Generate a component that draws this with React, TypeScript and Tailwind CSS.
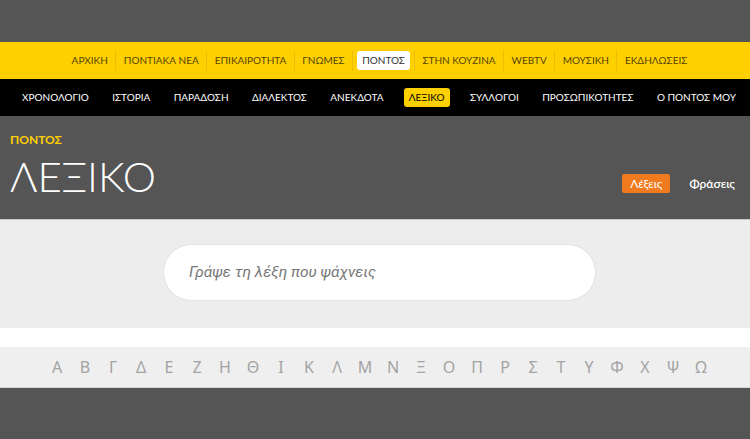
import React from 'react';

const topNav = ['ΑΡΧΙΚΗ', 'ΠΟΝΤΙΑΚΑ ΝΕΑ', 'ΕΠΙΚΑΙΡΟΤΗΤΑ', 'ΓΝΩΜΕΣ', 'ΠΟΝΤΟΣ', 'ΣΤΗΝ ΚΟΥΖΙΝΑ', 'WEBTV', 'ΜΟΥΣΙΚΗ', 'ΕΚΔΗΛΩΣΕΙΣ'];
const subNav = ['ΧΡΟΝΟΛΟΓΙΟ', 'ΙΣΤΟΡΙΑ', 'ΠΑΡΑΔΟΣΗ', 'ΔΙΑΛΕΚΤΟΣ', 'ΑΝΕΚΔΟΤΑ', 'ΛΕΞΙΚΟ', 'ΣΥΛΛΟΓΟΙ', 'ΠΡΟΣΩΠΙΚΟΤΗΤΕΣ', 'Ο ΠΟΝΤΟΣ ΜΟΥ'];
const letters = 'ΑΒΓΔΕΖΗΘΙΚΛΜΝΞΟΠΡΣΤΥΦΧΨΩ'.split('');

const App: React.FC = () => {
  return (
    <div className="w-[750px] h-[439px] overflow-hidden bg-[#555555] antialiased font-['Lato','Noto_Sans',sans-serif]">
      {/* top strip */}
      <div className="h-[42px]" />

      {/* yellow main nav */}
      <div className="h-[37px] bg-[#ffd000] flex items-center justify-center pl-[9px]">
        {topNav.map((item, i) => (
          <div key={item} className={`flex items-center h-[20px] ${i > 0 ? 'border-l border-[#eebd00]' : ''}`}>
            <span
              className={`mx-[4px] px-[3.5px] h-[19px] flex items-center text-[10px] text-[#564400] rounded-[3px] ${
                item === 'ΠΟΝΤΟΣ' ? 'bg-white !text-[#333] px-[5px]' : ''
              }`}
            >
              {item}
            </span>
          </div>
        ))}
      </div>

      {/* black sub nav */}
      <div className="h-[37px] bg-black flex items-center justify-between pl-[19px] pr-[11px]">
        {subNav.map((item) => (
          <span
            key={item}
            className={`px-[3px] h-[19px] flex items-center text-[10px] text-white rounded-[3px] ${
              item === 'ΛΕΞΙΚΟ' ? 'bg-[#ffd000] !text-black px-[5px]' : ''
            }`}
          >
            {item}
          </span>
        ))}
      </div>

      {/* header */}
      <div className="h-[103px] flex justify-between px-[10px]">
        <div className="pt-[18px]">
          <div className="text-[12px] font-bold text-[#ffd000] leading-none">ΠΟΝΤΟΣ</div>
          <div className="text-[42px] font-light text-white leading-none mt-[9px]">ΛΕΞΙΚΟ</div>
        </div>
        <div className="flex items-start gap-[19px] pt-[58px] pr-[5px]">
          <span className="bg-[#f07a1e] text-white text-[12px] rounded-[2px] px-[8px] h-[19px] flex items-center">Λέξεις</span>
          <span className="text-white text-[12px] font-semibold h-[19px] flex items-center">Φράσεις</span>
        </div>
      </div>

      {/* search */}
      <div className="h-[109px] bg-[#ededed] border-t border-[#c9c9c9] flex justify-center pt-[24px] pl-[9px]">
        <div className="w-[433px] h-[57px] bg-white rounded-full border border-[#e2e2e2] flex items-center pl-[25px]">
          <span className="italic text-[15.5px] text-[#777] font-['Roboto','Noto_Sans',sans-serif]">Γράψε τη λέξη που ψάχνεις</span>
        </div>
      </div>

      <div className="h-[19px] bg-white" />

      {/* alphabet */}
      <div className="h-[41px] bg-[#efefef] border-b border-[#d4d4d4] flex items-center pl-[43px]">
        {letters.map((l) => (
          <span key={l} className="w-[28px] text-center text-[16px] font-normal text-[#a3a3a3] font-['Noto_Sans',sans-serif]">
            {l}
          </span>
        ))}
      </div>
    </div>
  );
};

export default App;
